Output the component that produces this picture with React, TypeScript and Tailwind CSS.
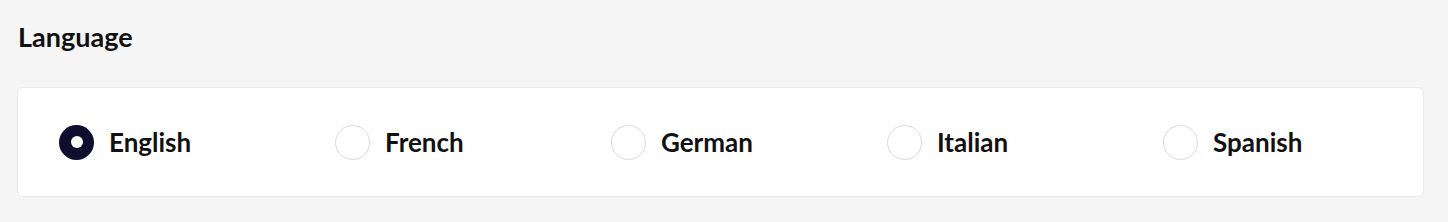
import React, { useState } from "react";

const languages = ["English", "French", "German", "Italian", "Spanish"];

export default function App() {
  const [selected, setSelected] = useState("English");

  return (
    <div className="min-h-[222px] w-full bg-[#f5f5f5] px-[17px] pt-[21px] font-['Lato','Liberation_Sans',sans-serif]">
      <h2 className="text-[27px] font-bold leading-[1.2] text-[#111111] pl-[1px]">Language</h2>
      <div className="mt-[34px] flex h-[110px] w-[1407px] items-center rounded-[6px] border border-[#e9e9e9] bg-white pl-[41px]">
        {languages.map((lang) => {
          const active = lang === selected;
          return (
            <label
              key={lang}
              onClick={() => setSelected(lang)}
              className="flex w-[276px] shrink-0 cursor-pointer items-center gap-[15px] last:w-auto"
            >
              {active ? (
                <span className="flex h-[35px] w-[35px] items-center justify-center rounded-full bg-[#110d2e]">
                  <span className="h-[12px] w-[12px] rounded-full bg-white" />
                </span>
              ) : (
                <span className="h-[35px] w-[35px] rounded-full border border-[#dadada] bg-white" />
              )}
              <span className="text-[26px] font-bold leading-[1.2] text-[#111111]">{lang}</span>
            </label>
          );
        })}
      </div>
    </div>
  );
}
